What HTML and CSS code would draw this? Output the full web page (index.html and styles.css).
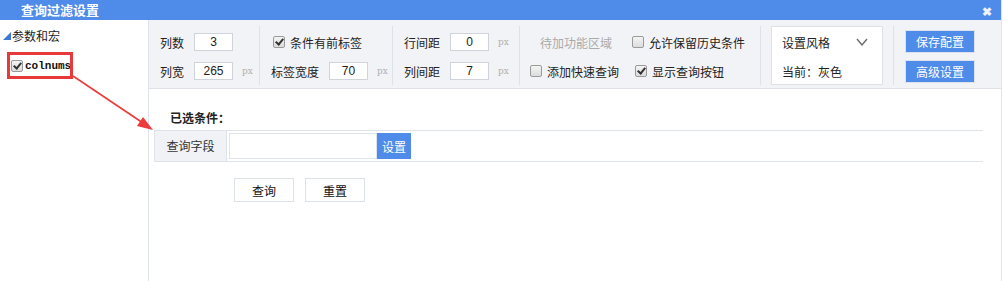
FILE: index.html
```html
<!DOCTYPE html>
<html lang="zh-CN">
<head>
  <meta charset="UTF-8">
  <title>查询过滤设置</title>
  <link rel="stylesheet" href="styles.css">
</head>
<body>
  <div class="dialog">
    <div class="titlebar">
      <span class="title">查询过滤设置</span>
      <span class="close">&#x2716;</span>
    </div>
    <div class="dialog-body">
      <div class="sidebar">
        <div class="tree-node"><span class="tri"></span>参数和宏</div>
        <div class="tree-leaf">
          <span class="cb checked"></span><span class="leaf-text">colnums</span>
        </div>
      </div>
      <div class="main">
        <div class="toolbar">
          <div class="group g1">
            <div class="row"><span class="lbl">列数</span><span class="num">3</span></div>
            <div class="row"><span class="lbl">列宽</span><span class="num">265</span><span class="px">px</span></div>
          </div>
          <div class="group g2">
            <div class="row"><span class="cb checked"></span><span class="cb-text">条件有前标签</span></div>
            <div class="row"><span class="lbl">标签宽度</span><span class="num">70</span><span class="px">px</span></div>
          </div>
          <div class="group g3">
            <div class="row"><span class="lbl">行间距</span><span class="num">0</span><span class="px">px</span></div>
            <div class="row"><span class="lbl">列间距</span><span class="num">7</span><span class="px">px</span></div>
          </div>
          <div class="group g4">
            <div class="row">
              <span class="muted">待加功能区域</span>
              <span class="opt opt-a"><span class="cb"></span><span class="cb-text">允许保留历史条件</span></span>
            </div>
            <div class="row">
              <span class="opt"><span class="cb"></span><span class="cb-text">添加快速查询</span></span>
              <span class="opt opt-b"><span class="cb checked"></span><span class="cb-text">显示查询按钮</span></span>
            </div>
          </div>
          <div class="group g5">
            <div class="style-box">
              <div class="style-head">设置风格
                <svg class="chev" width="12" height="8" viewBox="0 0 12 8"><path d="M1 1 L6 7 L11 1" fill="none" stroke="#6b6b6b" stroke-width="1.4"/></svg>
              </div>
              <div class="style-cur">当前：灰色</div>
            </div>
          </div>
          <div class="group g6">
            <button class="btn-blue">保存配置</button>
            <button class="btn-blue">高级设置</button>
          </div>
        </div>
        <div class="content">
          <div class="sel-title">已选条件：</div>
          <div class="cond-row">
            <div class="cond-label">查询字段</div>
            <div class="cond-input"></div>
            <button class="cond-btn">设置</button>
          </div>
          <div class="actions">
            <button class="btn-plain">查询</button>
            <button class="btn-plain">重置</button>
          </div>
        </div>
      </div>
    </div>
    <div class="mark-box"></div>
    <svg class="arrow" width="160" height="140" viewBox="0 0 160 140">
      <line x1="73" y1="76" x2="146" y2="125" stroke="#ee3a3a" stroke-width="1.6"/>
      <path d="M153 130 L137 126 L143 117 Z" fill="#ee3a3a"/>
    </svg>
    <div class="caret"></div>
  </div>
</body>
</html>
```

FILE: styles.css
```css
body {
  margin: 0;
  padding: 0;
  font-family: "Noto Sans CJK SC", "Liberation Sans", sans-serif;
  font-size: 12px;
  color: #333;
  background: #fff;
}
.dialog {
  position: relative;
  width: 1001px;
  height: 281px;
  border-right: 1px solid #e3e5ea;
  overflow: hidden;
}
.titlebar {
  height: 20px;
  background: #4f8be8;
  color: #fff;
  display: flex;
  align-items: center;
  justify-content: space-between;
  padding: 0 9px 0 21px;
}
.title {
  font-size: 13px;
  font-weight: bold;
  line-height: 20px;
}
.close {
  font-size: 12px;
  font-weight: bold;
  color: #eef2fa;
}
.dialog-body {
  display: flex;
  height: 261px;
}
.sidebar {
  width: 148px;
  border-right: 1px solid #dfe4ec;
  padding-top: 6px;
}
.tree-node {
  display: flex;
  align-items: center;
  height: 18px;
  padding-left: 3px;
  color: #222;
}
.tri {
  width: 0;
  height: 0;
  border-left: 8px solid transparent;
  border-bottom: 8px solid #3a78d4;
  margin: 2px 1px 0 0;
}
.tree-leaf {
  display: flex;
  align-items: center;
  height: 20px;
  margin-top: 12px;
  padding-left: 11px;
}
.leaf-text {
  font-family: "Liberation Mono", monospace;
  font-size: 11px;
  font-weight: bold;
  color: #111;
  margin-left: 2px;
}
.cb {
  display: inline-block;
  box-sizing: border-box;
  width: 12px;
  height: 12px;
  border: 1px solid #9a9a9a;
  border-radius: 2px;
  background: linear-gradient(#f4f4f4, #dcdcdc);
  position: relative;
  flex: none;
}
.cb.checked::after {
  content: "";
  position: absolute;
  left: 3px;
  top: 0px;
  width: 3px;
  height: 6px;
  border-right: 2px solid #333;
  border-bottom: 2px solid #333;
  transform: rotate(40deg);
}
.main {
  flex: 1;
  display: flex;
  flex-direction: column;
}
.toolbar {
  display: flex;
  height: 68px;
  background: #f2f3f7;
  border-bottom: 1px solid #dfe2e8;
}
.group {
  box-sizing: border-box;
  margin: 6px 0 3px;
  border-right: 1px solid #dde1e8;
  display: flex;
  flex-direction: column;
  gap: 11px;
  padding: 7px 0 5px 11px;
}
.g1 { width: 111px; }
.g2 { width: 133px; }
.g3 { width: 127px; }
.g4 { width: 241px; padding-left: 10px; }
.g5 { width: 133px; padding: 0 0 0 10px; }
.g6 { border-right: none; padding: 4px 0 0 11px; gap: 7px; }
.row {
  display: flex;
  align-items: center;
  height: 18px;
  white-space: nowrap;
}
.lbl {
  margin-right: 10px;
  color: #222;
}
.num {
  box-sizing: border-box;
  width: 39px;
  height: 18px;
  border: 1px solid #cfd4dc;
  background: #fff;
  text-align: center;
  line-height: 16px;
  font-family: "Liberation Sans", sans-serif;
  font-size: 12px;
  color: #222;
}
.px {
  font-family: "DejaVu Serif", "Liberation Serif", serif;
  font-size: 9px;
  color: #b0b0b0;
  margin-left: 9px;
}
.g2 .row:first-child { padding-left: 2px; }
.cb-text {
  margin-left: 5px;
  color: #222;
}
.muted {
  color: #aaa;
  margin-left: 10px;
}
.opt {
  display: flex;
  align-items: center;
}
.opt-a { margin-left: 20px; }
.opt-b { margin-left: 16px; }
.style-box {
  box-sizing: border-box;
  width: 112px;
  height: 59px;
  border: 1px solid #dde1e8;
  background: #fff;
  padding: 6px 0 0 10px;
}
.style-head {
  display: flex;
  align-items: center;
  height: 18px;
  color: #222;
}
.chev {
  margin-left: 26px;
}
.style-cur {
  margin-top: 12px;
  color: #222;
}
.btn-blue {
  width: 70px;
  height: 23px;
  border: 1px solid #dbe2ec;
  background: #4f8be9;
  color: #fff;
  font-family: inherit;
  font-size: 12px;
  padding: 0;
}
.content {
  padding: 20px 0 0 5px;
}
.sel-title {
  font-weight: bold;
  color: #222;
  padding-left: 16px;
  height: 18px;
  line-height: 18px;
}
.cond-row {
  display: flex;
  align-items: center;
  width: 829px;
  height: 30px;
  margin-top: 3px;
  border-top: 1px solid #dfe3ea;
  border-bottom: 1px solid #dfe3ea;
}
.cond-label {
  box-sizing: border-box;
  width: 73px;
  height: 30px;
  line-height: 30px;
  text-align: center;
  background: #f0f2f5;
  border-left: 1px solid #dfe3ea;
  border-right: 1px solid #dfe3ea;
  color: #333;
}
.cond-input {
  box-sizing: border-box;
  width: 148px;
  height: 26px;
  margin-left: 2px;
  border: 1px solid #dfe3ea;
  background: #fff;
}
.cond-btn {
  width: 34px;
  height: 26px;
  border: none;
  background: #4f8be9;
  color: #fff;
  font-family: inherit;
  font-size: 12px;
  padding: 0;
}
.actions {
  display: flex;
  gap: 11px;
  padding: 16px 0 0 80px;
}
.btn-plain {
  width: 60px;
  height: 24px;
  border: 1px solid #dde1e8;
  background: #fff;
  color: #111;
  font-family: inherit;
  font-size: 12px;
  padding: 0;
}
.mark-box {
  position: absolute;
  left: 7px;
  top: 52px;
  width: 60px;
  height: 21px;
  border: 3px solid #e8383a;
}
.arrow {
  position: absolute;
  left: 0;
  top: 0;
}
.caret {
  position: absolute;
  left: 1001px;
  top: 173px;
  width: 2px;
  height: 15px;
  background: #000;
}
```
